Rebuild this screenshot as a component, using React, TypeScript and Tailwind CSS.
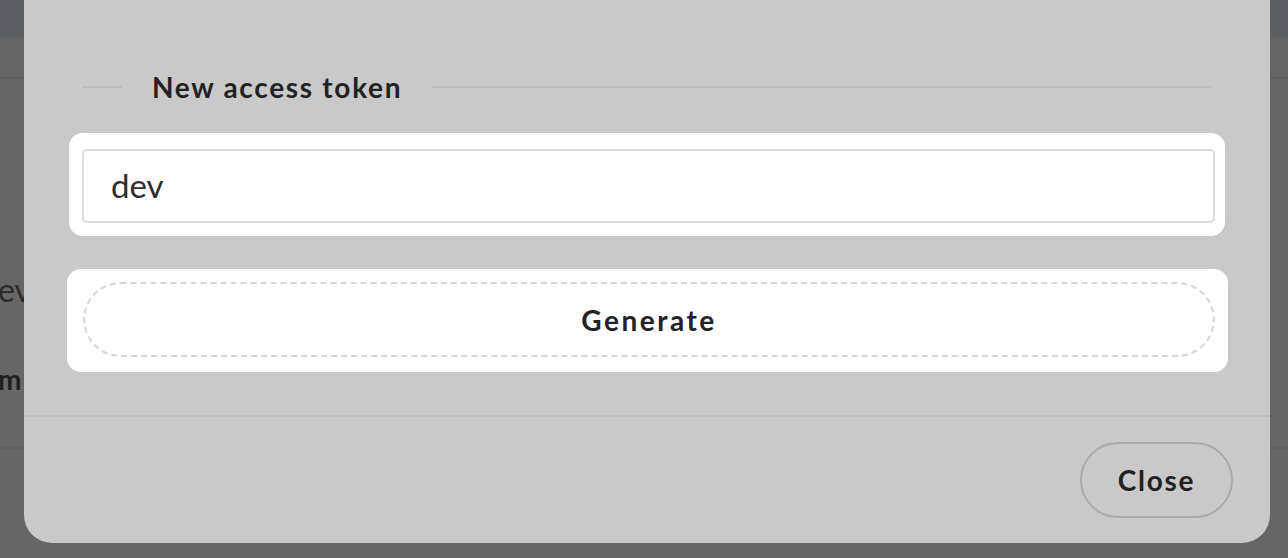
import React from 'react';

const font = { fontFamily: 'Lato, "Open Sans", sans-serif' };

const App: React.FC = () => {
    return (
        <div className="relative h-[558px] w-full overflow-hidden bg-[#666666] text-[#222]" style={font}>
            {/* Dimmed page behind the modal */}
            <div className="flex h-full flex-col">
                <div className="h-[38px] bg-[#5c5f63]"></div>
                <div className="h-[39px]"></div>
                <div className="h-[2px] bg-[#5e5e5e]"></div>
                <div className="h-[196px]"></div>
                <div className="-ml-[20px] whitespace-nowrap text-[32px] leading-[30px] text-[#2a2a2a]">dev</div>
                <div className="h-[64px]"></div>
                <div className="-ml-[2px] text-[28px] font-bold leading-[20px] text-[#1f1f1f]">m</div>
                <div className="h-[58px]"></div>
                <div className="h-[2px] bg-[#5e5e5e]"></div>
            </div>

            {/* Modal */}
            <div className="absolute left-[24px] right-[18px] top-0 flex h-[543px] flex-col rounded-b-[28px] bg-[#c9c9c9]">
                <div className="flex flex-col px-[45px] pt-[72px]">
                    {/* Heading */}
                    <div className="flex h-[30px] items-center px-[13px]">
                        <div className="h-[2px] w-[40px] bg-[#bcbcbc]"></div>
                        <div className="px-[30px] text-[28px] font-bold tracking-[1.7px] leading-[30px] text-[#222]">New access token</div>
                        <div className="h-[2px] flex-1 bg-[#bcbcbc]"></div>
                    </div>

                    {/* Name field */}
                    <div className="mt-[31px] rounded-[14px] bg-white pb-[13px] pl-[13px] pr-[10px] pt-[16px]">
                        <div className="flex h-[74px] items-center rounded-[5px] border-2 border-[#dcdcdc] px-[27px] text-[33px] text-[#2e2e2e]">
                            dev
                        </div>
                    </div>

                    {/* Generate */}
                    <div className="-ml-[2px] -mr-[3px] mt-[33px] rounded-[14px] bg-white pb-[15px] pl-[16px] pr-[13px] pt-[13px]">
                        <div className="flex h-[75px] items-center justify-center rounded-full border-2 border-dashed border-[#d6d6d6] text-[28px] font-bold tracking-[2.5px] text-[#222]">
                            Generate
                        </div>
                    </div>
                </div>

                <div className="mt-[43px] h-[2px] bg-[#bdbdbd]"></div>

                <div className="flex flex-1 items-end justify-end pb-[25px] pr-[37px]">
                    <div className="flex h-[76px] w-[153px] items-center justify-center rounded-full border-2 border-[#aaaaaa] text-[28px] font-bold tracking-[1.7px] text-[#222]">
                        Close
                    </div>
                </div>
            </div>
        </div>
    );
};

export default App;
